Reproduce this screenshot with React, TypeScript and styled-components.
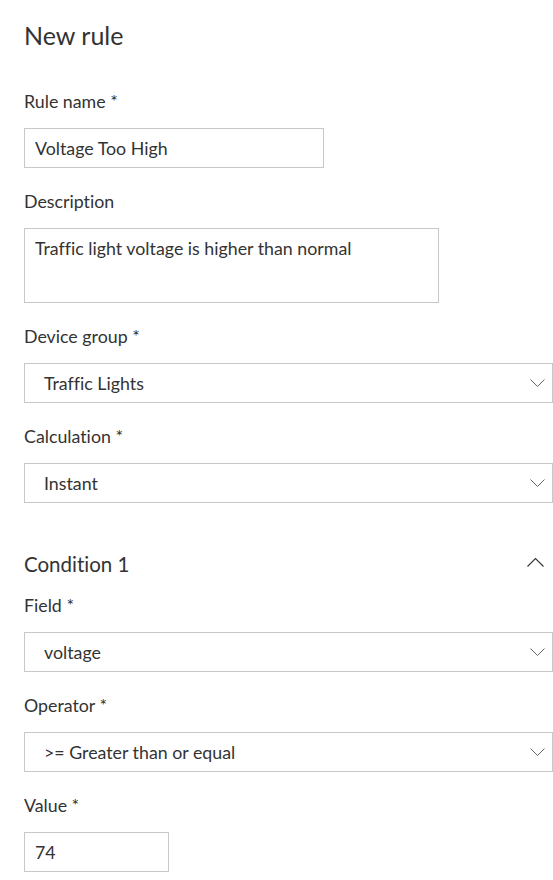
import styled, { createGlobalStyle } from 'styled-components'

const GlobalStyle = createGlobalStyle`
  body {
    margin: 0;
    background: #ffffff;
    color: #333333;
    font-family: Lato, "Segoe UI", "Open Sans", sans-serif;
    font-variant-ligatures: none;
  }
`

const Page = styled.div`
  width: 553px;
  box-sizing: border-box;
  padding: 17px 0 20px 24px;
`

const Title = styled.h1`
  margin: 0 0 36px;
  font-size: 25px;
  font-weight: 400;
  line-height: 36px;
`

const Group = styled.div`
  display: flex;
  flex-direction: column;
  align-items: flex-start;

  & + & {
    margin-top: 21px;
  }
`

const Label = styled.label`
  font-size: 17.8px;
  line-height: 24px;
  margin-bottom: 15px;
`

const TextInput = styled.input<{ $width: number }>`
  width: ${(p) => p.$width}px;
  height: 40px;
  box-sizing: border-box;
  border: 1px solid #c8c8c8;
  border-radius: 0;
  padding: 0 10px;
  font-family: inherit;
  font-size: 17.8px;
  font-variant-ligatures: none;
  color: #333333;
  outline: none;
  background: #ffffff;
`

const TextArea = styled.textarea`
  width: 415px;
  height: 75px;
  box-sizing: border-box;
  border: 1px solid #c8c8c8;
  border-radius: 0;
  padding: 7px 10px;
  font-family: inherit;
  font-size: 17.8px;
  font-variant-ligatures: none;
  line-height: 24px;
  color: #333333;
  resize: none;
  outline: none;
`

const Dropdown = styled.div`
  display: flex;
  align-items: center;
  justify-content: space-between;
  width: 100%;
  height: 40px;
  box-sizing: border-box;
  border: 1px solid #c8c8c8;
  padding: 0 7px 0 19px;
  font-size: 17.8px;
  cursor: pointer;
`

const SectionHeader = styled.div`
  display: flex;
  justify-content: space-between;
  align-items: flex-start;
  margin: 47px 0 15px;
  padding-right: 9px;
  font-size: 20.5px;
  line-height: 28px;

  svg {
    margin-top: 7px;
  }
`

const ChevronDown = () => (
  <svg width="15" height="8" viewBox="0 0 15 8" fill="none">
    <polyline points="0.5,0.5 7.5,7.5 14.5,0.5" stroke="#666666" strokeWidth="1" />
  </svg>
)

const ChevronUp = () => (
  <svg width="17" height="10" viewBox="0 0 17 10" fill="none">
    <polyline points="0.5,9.5 8.5,1.5 16.5,9.5" stroke="#333333" strokeWidth="1.1" />
  </svg>
)

const Select = ({ label, value }: { label: string; value: string }) => (
  <Group>
    <Label>{label}</Label>
    <Dropdown>
      <span>{value}</span>
      <ChevronDown />
    </Dropdown>
  </Group>
)

export default function App() {
  return (
    <Page>
      <GlobalStyle />
      <Title>New rule</Title>

      <Group>
        <Label>Rule name *</Label>
        <TextInput $width={300} readOnly value="Voltage Too High" />
      </Group>
      <Group>
        <Label>Description</Label>
        <TextArea readOnly value="Traffic light voltage is higher than normal" />
      </Group>
      <Select label="Device group *" value="Traffic Lights" />
      <Select label="Calculation *" value="Instant" />

      <SectionHeader>
        <span>Condition 1</span>
        <ChevronUp />
      </SectionHeader>
      <Select label="Field *" value="voltage" />
      <Select label="Operator *" value=">= Greater than or equal" />
      <Group>
        <Label>Value *</Label>
        <TextInput $width={145} readOnly value="74" />
      </Group>
    </Page>
  )
}
